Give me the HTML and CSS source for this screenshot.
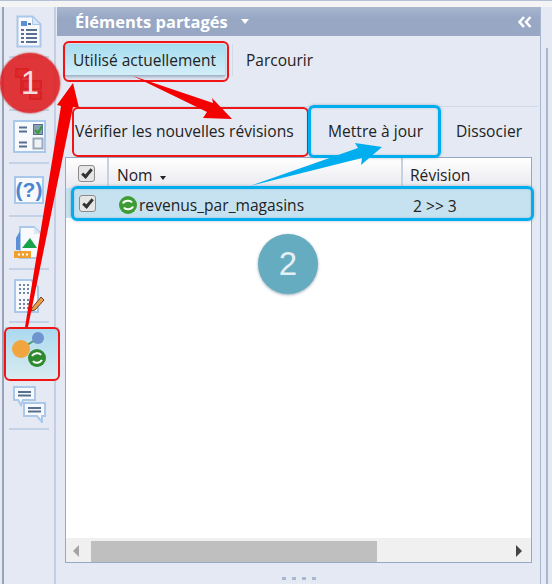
FILE: index.html
```html
<!DOCTYPE html>
<html lang="fr">
<head>
  <meta charset="UTF-8" />
  <title>Éléments partagés</title>
  <link rel="stylesheet" href="styles.css">
</head>
<body>
  <div class="top-strip"></div>
  <div class="app">
    <div class="rail">
      <div class="rail-item rail-first">
        <svg width="26" height="33" viewBox="0 0 26 33"><path d="M1.500 1.500h15l8 8v22h-23z" fill="#f7f9fd" stroke="#a9c8ea" stroke-width="2"/><path d="M16.500 1.500v8h8z" fill="#dbe6f4" stroke="#a9c8ea"/><rect x="5" y="6" width="6" height="5" fill="#5b8fd6"/><path d="M12 9h3M5 15h3M10 15h11M5 19h3M10 19h11M5 23h3M10 23h11M5 27h3M10 27h11" stroke="#5a6f8e" stroke-width="2"/></svg>
      </div>
      <div class="rail-item">
        <svg width="28" height="32" viewBox="0 0 28 32"><path d="M1 1h12v8H1zM8 13h18v8H8zM15 24h11v7H15z" fill="#e08a8a" stroke="#a83a3a" stroke-width="2"/><path d="M6 9v16h9" fill="none" stroke="#a83a3a" stroke-width="2"/></svg>
      </div>
      <div class="rail-item">
        <svg width="33" height="33" viewBox="0 0 33 33"><rect x="1" y="1" width="31" height="31" fill="#f7f9fd" stroke="#a9c8ea" stroke-width="2"/><path d="M6 7.500h8M6 11.500h8M6 22.500h8M6 26.500h8" stroke="#56708f" stroke-width="2"/><rect x="20.500" y="4.500" width="9" height="10" fill="#8aa0b4" stroke="#56708f"/><path d="M22 10l3 3 4-7" fill="none" stroke="#3d9a35" stroke-width="2"/><rect x="20.500" y="18.500" width="9" height="10" fill="#eef2f7" stroke="#9aa8ba" stroke-width="2"/></svg>
      </div>
      <div class="rail-item">
        <svg width="30" height="28" viewBox="0 0 30 28"><rect x="1" y="1" width="28" height="26" fill="#f7f9fd" stroke="#a9c8ea" stroke-width="2"/><text x="15" y="21" text-anchor="middle" class="help-mark">(?)</text></svg>
      </div>
      <div class="rail-item">
        <svg width="30" height="33" viewBox="0 0 30 33"><path d="M6 1h14l7 7v24H6z" fill="#f7f9fd" stroke="#a9c8ea" stroke-width="2"/><path d="M20 1v7h7z" fill="#dbe6f4"/><path d="M6 5L2 12v12h4z" fill="#5b8fd6"/><path d="M8 22l8-10 7 10z" fill="#16a34a"/><rect x="0" y="25" width="17" height="7" fill="#f0a030"/><path d="M4 28.500h2M8 28.500h2M12 28.500h2" stroke="#fff" stroke-width="2"/></svg>
      </div>
      <div class="rail-item">
        <svg width="31" height="34" viewBox="0 0 31 34"><path d="M1 1h16l7 7v25H1z" fill="#f7f9fd" stroke="#a9c8ea" stroke-width="2"/><path d="M5 6h12M5 10h12M5 14h12M5 21h12M5 25h12M5 29h12" stroke="#7088a5" stroke-width="2" stroke-dasharray="2 2"/><path d="M18 29l9-11 3 3-9 10-4 1z" fill="#e8a04a" stroke="#7a3a20"/></svg>
      </div>
      <div class="rail-active">
        <svg width="54" height="54" viewBox="0 0 54 54"><path d="M16 22L33 11" stroke="#4f9a6a" stroke-width="2"/><circle cx="33" cy="11" r="6" fill="#6f94d0"/><circle cx="16" cy="22" r="9" fill="#f0a53f"/><circle cx="32" cy="31" r="9" fill="#2f8a2f"/><path d="M27 29c2-3 7-4 9-1M37 33c-2 3-7 4-9 1" fill="none" stroke="#fff" stroke-width="2"/></svg>
      </div>
      <div class="rail-item rail-chat">
        <svg width="33" height="37" viewBox="0 0 33 37"><path d="M1 1h21v13H10l-2 5-3-5H1z" fill="#f7f9fd" stroke="#a9c8ea" stroke-width="2"/><path d="M11 17h21v13h-3v6l-5-6H11z" fill="#f7f9fd" stroke="#a9c8ea" stroke-width="2"/><path d="M5 6h13M5 9.500h13M15 22h13M15 25.500h13" stroke="#56708f" stroke-width="2"/></svg>
      </div>
    </div>

    <div class="panel">
      <div class="panel-head">
        <span class="panel-title">Éléments partagés</span>
        <span class="caret-white"></span>
        <svg class="collapse" width="14" height="12" viewBox="0 0 14 12"><path d="M6 1L1.500 6 6 11M12.500 1L8 6l4.500 5" fill="none" stroke="#fff" stroke-width="2.500"/></svg>
      </div>
      <div class="tabs">
        <span class="tab tab-on">Utilisé actuellement</span>
        <span class="tab-sep"></span>
        <span class="tab">Parcourir</span>
      </div>
      <div class="toolbar">
        <span class="tool tool-check">Vérifier les nouvelles révisions</span>
        <span class="tool tool-update">Mettre à jour</span>
        <span class="tool">Dissocier</span>
      </div>
      <div class="grid-box">
        <div class="grid-head">
          <div class="cell-check"><span class="check"></span></div>
          <div class="cell-name">Nom <span class="caret-dark"></span></div>
          <div class="cell-rev">Révision</div>
        </div>
        <div class="grid-row">
          <div class="cell-check"><span class="check"></span></div>
          <div class="cell-name row-name">
            <svg width="18" height="18" viewBox="0 0 18 18"><circle cx="9" cy="9" r="9" fill="#3f9c35"/><path d="M4 7.500c1-3 7-4 9-1M14 10.500c-1 3-7 4-9 1" fill="none" stroke="#fff" stroke-width="2"/></svg>
            <span>revenus_par_magasins</span>
          </div>
          <div class="cell-rev">2 &gt;&gt; 3</div>
        </div>
        <div class="grid-body"></div>
        <div class="scrollbar">
          <span class="arrow-left"></span>
          <span class="thumb"></span>
          <span class="arrow-right"></span>
        </div>
      </div>
      <div class="grip"><span></span><span></span><span></span><span></span></div>
    </div>
    <div class="side-edge"></div>
  </div>

  <!-- annotations on top of the screenshot -->
  <div class="mark mark-tab"></div>
  <div class="mark mark-rail"></div>
  <div class="mark mark-check"></div>
  <div class="mark blue mark-update"></div>
  <div class="mark blue mark-row"></div>
  <svg class="arrows" width="552" height="584" viewBox="0 0 552 584">
    <path d="M25 327L61 106l-4-1 16-22 6 25-6-1L28 327z" fill="#f50000"/>
    <path d="M133 76l80 27-1-5 20 21-29-1 4-6z" fill="#f50000"/>
    <path d="M250 186l108-38-3-5 27 4-21 18 1-7z" fill="#00aeef"/>
  </svg>
  <div class="badge badge-one">1</div>
  <div class="badge badge-two">2</div>
</body>
</html>
```

FILE: styles.css
```css
html, body {
  margin: 0;
  padding: 0;
  width: 552px;
  height: 584px;
  overflow: hidden;
  background: #e4e9f3;
  font-family: "Open Sans", "Liberation Sans", sans-serif;
  color: #222;
}

.top-strip {
  height: 7px;
  box-sizing: border-box;
  background: #f4f4f4;
  border-top: 1px solid #b4c0d6;
}

.app {
  display: flex;
  height: 577px;
}

.rail {
  width: 54px;
  margin-left: 2px;
  border-left: 2px solid #97a3b8;
  border-right: 2px solid #c3cfe2;
  display: flex;
  flex-direction: column;
  align-items: center;
  box-sizing: border-box;
  flex: none;
}

.rail-item {
  width: 40px;
  height: 53px;
  display: flex;
  align-items: center;
  justify-content: center;
  border-bottom: 2px solid #c3d2e6;
  box-sizing: border-box;
  flex: none;
}

.rail-first { height: 51px; }

.rail-active {
  align-self: flex-start;
  width: 54px;
  height: 54px;
  margin: 4px 0 0 1px;
  background: linear-gradient(#a9d8ef, #dcecf0);
  flex: none;
  position: relative;
}

.rail-active svg { display: block; }

.rail-chat { height: 49px; }

.help-mark {
  font: bold 21px "Liberation Sans", sans-serif;
  fill: #4a86d0;
}

.panel {
  width: 484px;
  margin-left: 1px;
  border-right: 1px solid #a9b8d2;
  display: flex;
  flex-direction: column;
  box-sizing: border-box;
  flex: none;
}

.panel-head {
  height: 29px;
  background: linear-gradient(#a9b6cf, #97a7c4 40%);
  display: flex;
  align-items: center;
  padding: 0 8px 0 18px;
  flex: none;
}

.panel-title {
  color: #fff;
  font-weight: 700;
  font-size: 16.500px;
}

.caret-white {
  width: 0;
  height: 0;
  border: 4.500px solid transparent;
  border-top: 5px solid #fff;
  border-bottom: 0;
  margin-left: 13px;
}

.collapse { margin-left: auto; }

.tabs {
  display: flex;
  align-items: flex-start;
  height: 70px;
  padding-top: 8px;
  box-sizing: border-box;
  flex: none;
}

.tab {
  height: 32px;
  line-height: 32px;
  font-size: 15.500px;
}

.tab-on {
  margin-left: 8px;
  width: 160px;
  padding-left: 8px;
  box-sizing: border-box;
  background: linear-gradient(#a5dcf0, #d3eef8);
  border-bottom: 1px solid #9fb4c8;
  box-shadow: 0 1px 3px rgba(90, 110, 140, 0.5);
}

.tab-sep {
  width: 1px;
  height: 32px;
  margin: 0 13px 0 7px;
  background: #d0dae9;
}

.toolbar {
  display: flex;
  height: 51px;
  margin: 0 2px 0 9px;
  border-top: 1px solid #d0dae9;
  box-sizing: border-box;
  flex: none;
}

.tool {
  font-size: 15.600px;
  line-height: 48px;
  padding-left: 15px;
}

.tool-check {
  width: 242px;
  box-sizing: border-box;
  padding-left: 9px;
}

.tool-update {
  width: 133px;
  box-sizing: border-box;
  padding-left: 20px;
}

.grid-box {
  margin-left: 8px;
  width: 467px;
  height: 406px;
  border: 1px solid #94a8c8;
  box-sizing: border-box;
  background: #fff;
  display: flex;
  flex-direction: column;
  flex: none;
}

.grid-head {
  display: flex;
  height: 30px;
  background: linear-gradient(#ffffff, #e9e9ef);
  font-size: 15.600px;
  flex: none;
}

.cell-check {
  width: 43px;
  padding-right: 1px;
  display: flex;
  align-items: center;
  justify-content: center;
  border-right: 2px solid #c6d2e2;
  box-sizing: border-box;
  flex: none;
}

.cell-name {
  width: 294px;
  padding-left: 8px;
  line-height: 34px;
  box-sizing: border-box;
  border-right: 2px solid #c6d2e2;
  flex: none;
}

.cell-rev {
  padding-left: 7px;
  line-height: 34px;
}

.grid-row {
  display: flex;
  height: 30px;
  background: #c6e2f1;
  font-size: 15.600px;
  flex: none;
}

.grid-row .cell-check,
.grid-row .cell-name { border-right: none; }

.grid-row .cell-rev {
  padding-left: 10px;
  line-height: 36px;
}

.row-name {
  display: flex;
  align-items: center;
  gap: 2px;
  padding: 3px 0 0 10px;
}

.check {
  width: 15px;
  height: 15px;
  border: 1px solid #8b8b8b;
  border-radius: 3px;
  background: #e6e6e6;
  position: relative;
  display: block;
}

.check::after {
  content: "";
  position: absolute;
  left: 5px;
  top: 1px;
  width: 3px;
  height: 8px;
  border: solid #333;
  border-width: 0 3px 3px 0;
  transform: rotate(40deg);
}

.caret-dark {
  display: inline-block;
  width: 0;
  height: 0;
  border: 3.500px solid transparent;
  border-top: 4px solid #222;
  border-bottom: 0;
  margin-left: 3px;
  vertical-align: 1px;
}

.grid-body { flex: 1; }

.scrollbar {
  height: 24px;
  background: #f0f0f0;
  display: flex;
  align-items: center;
  padding: 2px 0 0 7px;
  box-sizing: border-box;
  flex: none;
}

.arrow-left {
  width: 0;
  height: 0;
  border: 6px solid transparent;
  border-right: 6px solid #a4a4a4;
  border-left: 0;
}

.thumb {
  width: 286px;
  height: 21px;
  background: #bfbfbf;
  margin-left: 12px;
}

.arrow-right {
  width: 0;
  height: 0;
  border: 6px solid transparent;
  border-left: 6px solid #444;
  border-right: 0;
  margin-left: auto;
  margin-right: 9px;
}

.grip {
  display: flex;
  justify-content: center;
  gap: 6px;
  margin-top: 14px;
}

.grip span {
  width: 4px;
  height: 3px;
  background: #a9b8d2;
}

.side-edge {
  width: 2px;
  margin: 41px 0 0 5px;
  background: #a9b8d2;
}

/* annotations */
.mark {
  position: absolute;
  box-sizing: border-box;
  border: 2px solid #f01414;
  border-radius: 6px;
}

.mark.blue {
  border: 3px solid #00aeef;
  box-shadow: 0 0 3px rgba(60, 80, 110, 0.4), inset 0 0 2px rgba(60, 80, 110, 0.3);
}

.mark-tab { left: 63px; top: 41px; width: 166px; height: 41px; }
.mark-rail { left: 4px; top: 327px; width: 56px; height: 54px; }
.mark-check { left: 72px; top: 107px; width: 237px; height: 50px; }
.mark-update { left: 308px; top: 105px; width: 133px; height: 53px; }
.mark-row { left: 71px; top: 186px; width: 463px; height: 35px; }

.arrows {
  position: absolute;
  left: 0;
  top: 0;
}

.badge {
  position: absolute;
  width: 60px;
  height: 60px;
  border-radius: 50%;
  display: flex;
  align-items: center;
  justify-content: center;
  font-size: 33px;
  font-family: "Liberation Sans", sans-serif;
}

.badge-one {
  left: 0;
  top: 53px;
  color: #f6dcdc;
  background: rgba(222, 32, 36, 0.9);
  box-shadow: 0 0 2px #b00;
}

.badge-two {
  left: 258px;
  top: 234px;
  color: #e4f0f4;
  background: #66acc0;
  box-shadow: 0 1px 3px #9ab;
}
```
